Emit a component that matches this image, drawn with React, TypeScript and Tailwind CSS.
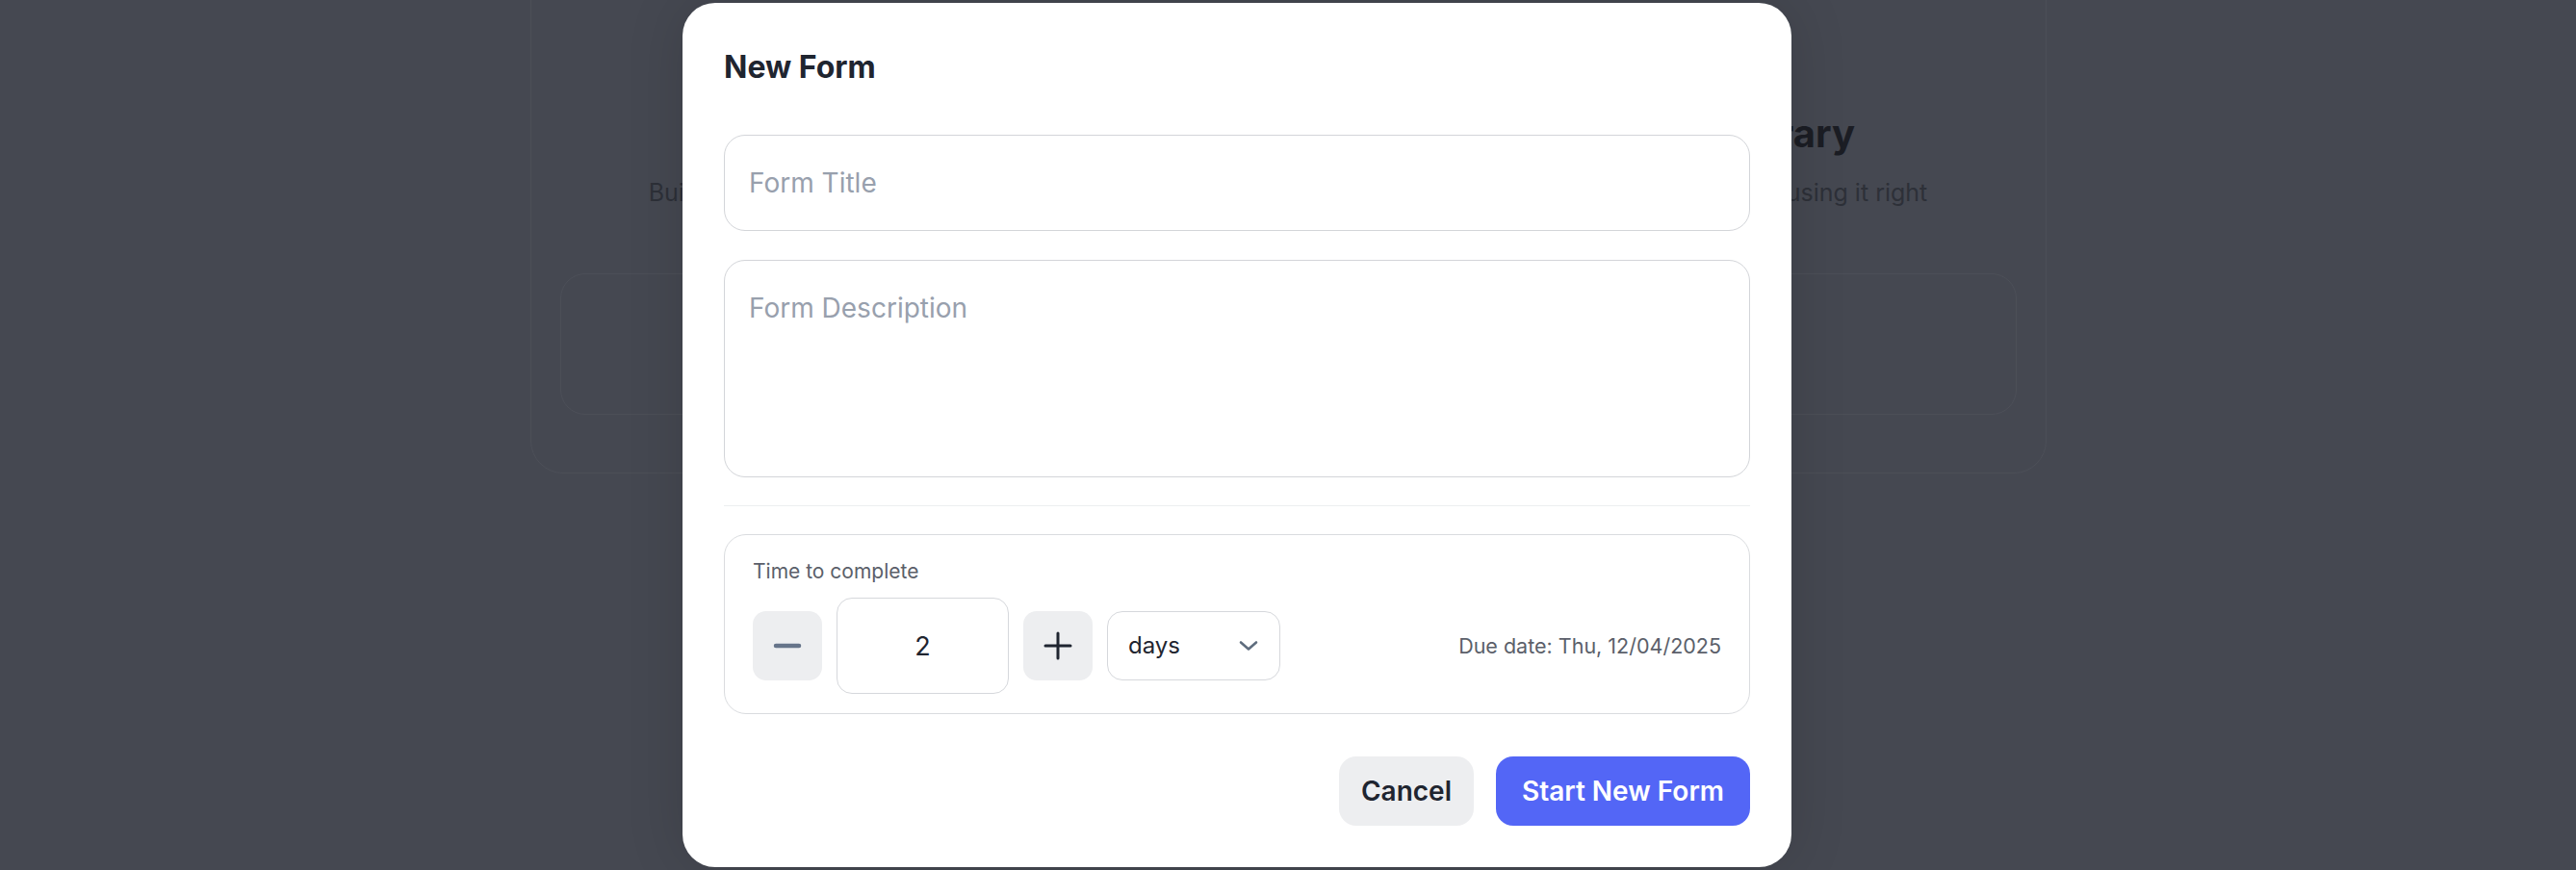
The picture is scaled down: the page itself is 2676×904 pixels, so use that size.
import React from 'react';

const FONT = "font-['Inter','Noto_Sans',sans-serif]";

function Chevron() {
  return (
    <svg width="20" height="12" viewBox="0 0 20 12" fill="none">
      <path d="M2 2.5l8 7 8-7" stroke="#5f6d7e" strokeWidth="2.6" strokeLinecap="round" strokeLinejoin="round" />
    </svg>
  );
}

function Stepper() {
  return (
    <div className="flex items-center gap-[15px]">
      <button className="flex h-[72px] w-[72px] items-center justify-center rounded-[14px] bg-[#edeef0]">
        <svg width="30" height="6" viewBox="0 0 30 6">
          <path d="M3 3h24" stroke="#66748a" strokeWidth="4.5" strokeLinecap="round" />
        </svg>
      </button>
      <input
        readOnly
        value="2"
        className="h-[100px] w-[179px] rounded-[16px] border border-[#d6d8dc] text-center text-[27px] text-[#1f2530] outline-none"
      />
      <button className="flex h-[72px] w-[72px] items-center justify-center rounded-[14px] bg-[#edeef0]">
        <svg width="30" height="30" viewBox="0 0 30 30">
          <path d="M15 2v26M2 15h26" stroke="#1f2530" strokeWidth="3" strokeLinecap="round" />
        </svg>
      </button>
      <div className="flex h-[72px] w-[180px] items-center justify-between rounded-[16px] border border-[#d6d8dc] pl-[21px] pr-[22px]">
        <span className="text-[24px] text-[#1f2530]">days</span>
        <Chevron />
      </div>
    </div>
  );
}

export default function App() {
  return (
    <div className={`relative h-[904px] w-full overflow-hidden bg-[#454851] ${FONT}`}>
      {/* page behind the overlay */}
      <div className="mx-auto mt-[-40px] w-[1575px] rounded-[34px] border border-white/[0.04] px-[30px] pb-[60px] pt-[153px]">
        <h1 className="text-center text-[40px] font-bold leading-[50px] text-[#1b1d24]">
          Welcome to the Company&apos;s HR Forms and Templates Library
        </h1>
        <p className="mt-[19px] text-center text-[25px] leading-[34px] text-[#2d3038]">
          Build a form from any template in the library, share it with your team and make sure that everyone is using it right
        </p>
        <div className="mt-[67px] h-[147px] rounded-[26px] border border-white/[0.04]" />
      </div>

      {/* modal */}
      <div className="absolute inset-0 flex items-start pl-[709px] pt-[3px]">
        <div className="flex w-[1152px] flex-col rounded-[34px] bg-white px-[43px] pb-[43px] pt-[47px] shadow-[0_0_60px_rgba(0,0,0,0.14)]">
          <h2 className="text-[32px] font-bold leading-[40px] text-[#1f2530]">New Form</h2>

          <input
            placeholder="Form Title"
            className="mt-[50px] h-[100px] w-full rounded-[22px] border border-[#d3d5d9] px-[25px] text-[28px] text-[#1f2530] outline-none placeholder:text-[#98a0ad]"
          />

          <textarea
            placeholder="Form Description"
            className="mt-[30px] block h-[226px] w-full resize-none rounded-[22px] border border-[#d3d5d9] px-[25px] py-[28px] text-[28px] leading-[42px] text-[#1f2530] outline-none placeholder:text-[#98a0ad]"
          />

          <div className="mt-[29px] h-px bg-[#eceef0]" />

          <div className="mt-[29px] rounded-[23px] border border-[#dadcdf] px-[29px] pb-[20px] pt-[23px]">
            <div className="text-[21px] leading-[30px] text-[#5b5f6a]">Time to complete</div>
            <div className="mt-[12px] flex items-center justify-between">
              <Stepper />
              <span className="text-[21.5px] text-[#5b5f6a]">Due date: Thu, 12/04/2025</span>
            </div>
          </div>

          <div className="mt-[44px] flex justify-end gap-[23px]">
            <button className="h-[72px] rounded-[18px] bg-[#edeef0] px-[23px] text-[28px] font-semibold text-[#1f2530]">
              Cancel
            </button>
            <button className="h-[72px] rounded-[18px] bg-[#5366f6] px-[27px] text-[28px] font-semibold text-white">
              Start New Form
            </button>
          </div>
        </div>
      </div>
    </div>
  );
}
